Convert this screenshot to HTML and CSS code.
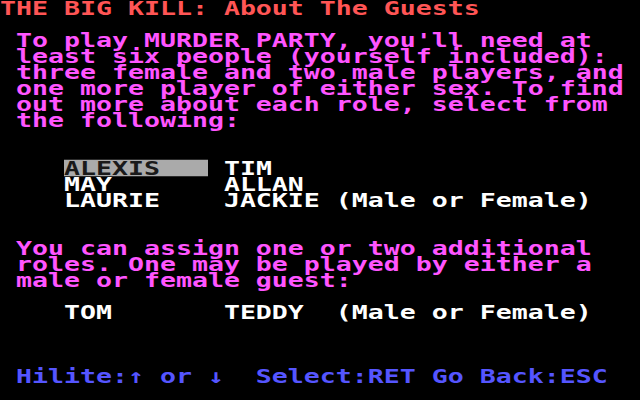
FILE: index.html
```html
<!DOCTYPE html>
<html>
<head>
<title>The Big Kill</title>
<link rel="stylesheet" href="styles.css">
</head>
<body>
<div class="screen">
<div class="row title">THE BIG KILL: About The Guests</div>
<div class="row"></div>
<div class="row text"> To play MURDER PARTY, you'll need at</div>
<div class="row text"> least six people (yourself included):</div>
<div class="row text"> three female and two male players, and</div>
<div class="row text"> one more player of either sex. To find</div>
<div class="row text"> out more about each role, select from</div>
<div class="row text"> the following:</div>
<div class="row"></div>
<div class="row"></div>
<div class="row name">    <span class="hilite">ALEXIS   </span> TIM</div>
<div class="row name">    MAY       ALLAN</div>
<div class="row name">    LAURIE    JACKIE (Male or Female)</div>
<div class="row"></div>
<div class="row"></div>
<div class="row text"> You can assign one or two additional</div>
<div class="row text"> roles. One may be played by either a</div>
<div class="row text"> male or female guest:</div>
<div class="row"></div>
<div class="row name">    TOM       TEDDY  (Male or Female)</div>
<div class="row"></div>
<div class="row"></div>
<div class="row"></div>
<div class="row keys"> Hilite:↑ or ↓  Select:RET Go Back:ESC</div>
<div class="row"></div>
</div>
</body>
</html>
```
FILE: styles.css
```css
html, body {
	margin: 0;
	height: 400px;
	overflow: hidden;
	background-color: black;
}
/* 40x25 text mode, 16x16 cells: wide glyphs squashed back to cell height */
.screen {
	width: 640px;
	font-family: "DejaVu Sans Mono", monospace;
	font-weight: bold;
	font-size: 26.576px;
	line-height: 21.3333px;
	transform: scaleY(0.75);
	transform-origin: top left;
}
.row {
	height: 21.3333px;
	white-space: pre;
}
.title {
	color: #ff5555;
}
.text {
	color: #ff55ff;
}
.name {
	color: #ffffff;
}
.keys {
	color: #5555ff;
}
.hilite {
	display: inline-block;
	vertical-align: top;
	height: 21.3333px;
	background-color: #aaaaaa;
	color: #1a1a1a;
}
```
